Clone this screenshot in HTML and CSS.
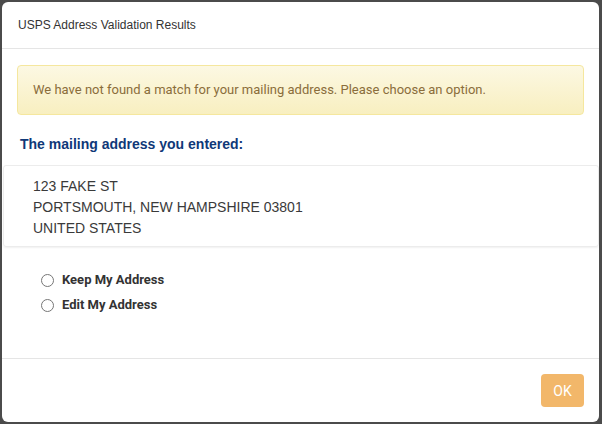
FILE: index.html
```html
<!DOCTYPE html>
<html lang="en">
<head>
    <meta charset="UTF-8">
    <meta name="viewport" content="width=device-width, initial-scale=1.0">
    <title>USPS Address Validation Results</title>
    <link rel="stylesheet" href="styles.css">
</head>
<body>
    <div class="modal">
        <div class="modal-header">
            <h4 class="modal-title">USPS Address Validation Results</h4>
        </div>

        <div class="modal-body">
            <div class="alert">We have not found a match for your mailing address. Please choose an option.</div>

            <h3 class="section-title">The mailing address you entered:</h3>
            <div class="address">
                <div>123 FAKE ST</div>
                <div>PORTSMOUTH, NEW HAMPSHIRE 03801</div>
                <div>UNITED STATES</div>
            </div>

            <form class="options">
                <label class="option">
                    <input type="radio" name="choice" value="keep">
                    <span>Keep My Address</span>
                </label>
                <label class="option">
                    <input type="radio" name="choice" value="edit">
                    <span>Edit My Address</span>
                </label>
            </form>
        </div>

        <div class="modal-footer">
            <button type="button" class="btn-ok" disabled>OK</button>
        </div>
    </div>
</body>
</html>
```

FILE: styles.css
```css
body {
    margin: 0;
    background-color: #4b4b4b;
    font-family: 'Liberation Sans', Arial, sans-serif;
    color: #333;
    height: 424px;
    overflow: hidden;
}
.modal {
    margin: 2px 0 0 2px;
    width: 597px;
    height: 420px;
    background-color: #fff;
    border-radius: 6px;
    display: flex;
    flex-direction: column;
}
.modal-header {
    height: 47px;
    box-sizing: border-box;
    padding: 0 16px;
    border-bottom: 1px solid #e5e5e5;
    display: flex;
    align-items: center;
}
.modal-title {
    margin: 0;
    font-size: 12px;
    font-weight: normal;
    color: #333;
}
.modal-body {
    padding: 16px 15px 0;
    height: 311px;
    box-sizing: border-box;
}
.alert {
    height: 50px;
    box-sizing: border-box;
    padding: 0 15px;
    line-height: 48px;
    font-family: 'Roboto', sans-serif;
    font-size: 13px;
    color: #8a6d3b;
    background-image: linear-gradient(to bottom, #fcf8e3 0%, #f8efc0 100%);
    border: 1px solid #f5e79e;
    border-radius: 4px;
}
.section-title {
    margin: 14px 0 0 3px;
    font-size: 14px;
    line-height: 30px;
    font-weight: bold;
    color: #0f3878;
}
.address {
    margin: 6px -15px 0 -14px;
    padding: 10px 29px 7px;
    font-size: 14px;
    line-height: 21px;
    color: #3a3a3a;
    border: 1px solid #ececec;
    border-radius: 3px;
    box-shadow: 0 1px 2px rgba(0,0,0,0.06);
}
.options {
    margin: 24px 0 0 24px;
    display: grid;
    gap: 7px;
}
.option {
    display: flex;
    align-items: center;
    gap: 8px;
    font-family: 'Roboto', sans-serif;
    font-size: 13px;
    font-weight: bold;
    color: #333;
    height: 18px;
}
.option input {
    margin: 2px 0 0 0;
    width: 13px;
    height: 13px;
}
.modal-footer {
    border-top: 1px solid #e5e5e5;
    padding: 15px;
    display: flex;
    justify-content: flex-end;
}
.btn-ok {
    width: 43px;
    height: 33px;
    border: none;
    border-radius: 4px;
    background-color: #f2b76a;
    color: #fff;
    font-family: 'Roboto', sans-serif;
    font-size: 14px;
    padding: 0;
}
```
